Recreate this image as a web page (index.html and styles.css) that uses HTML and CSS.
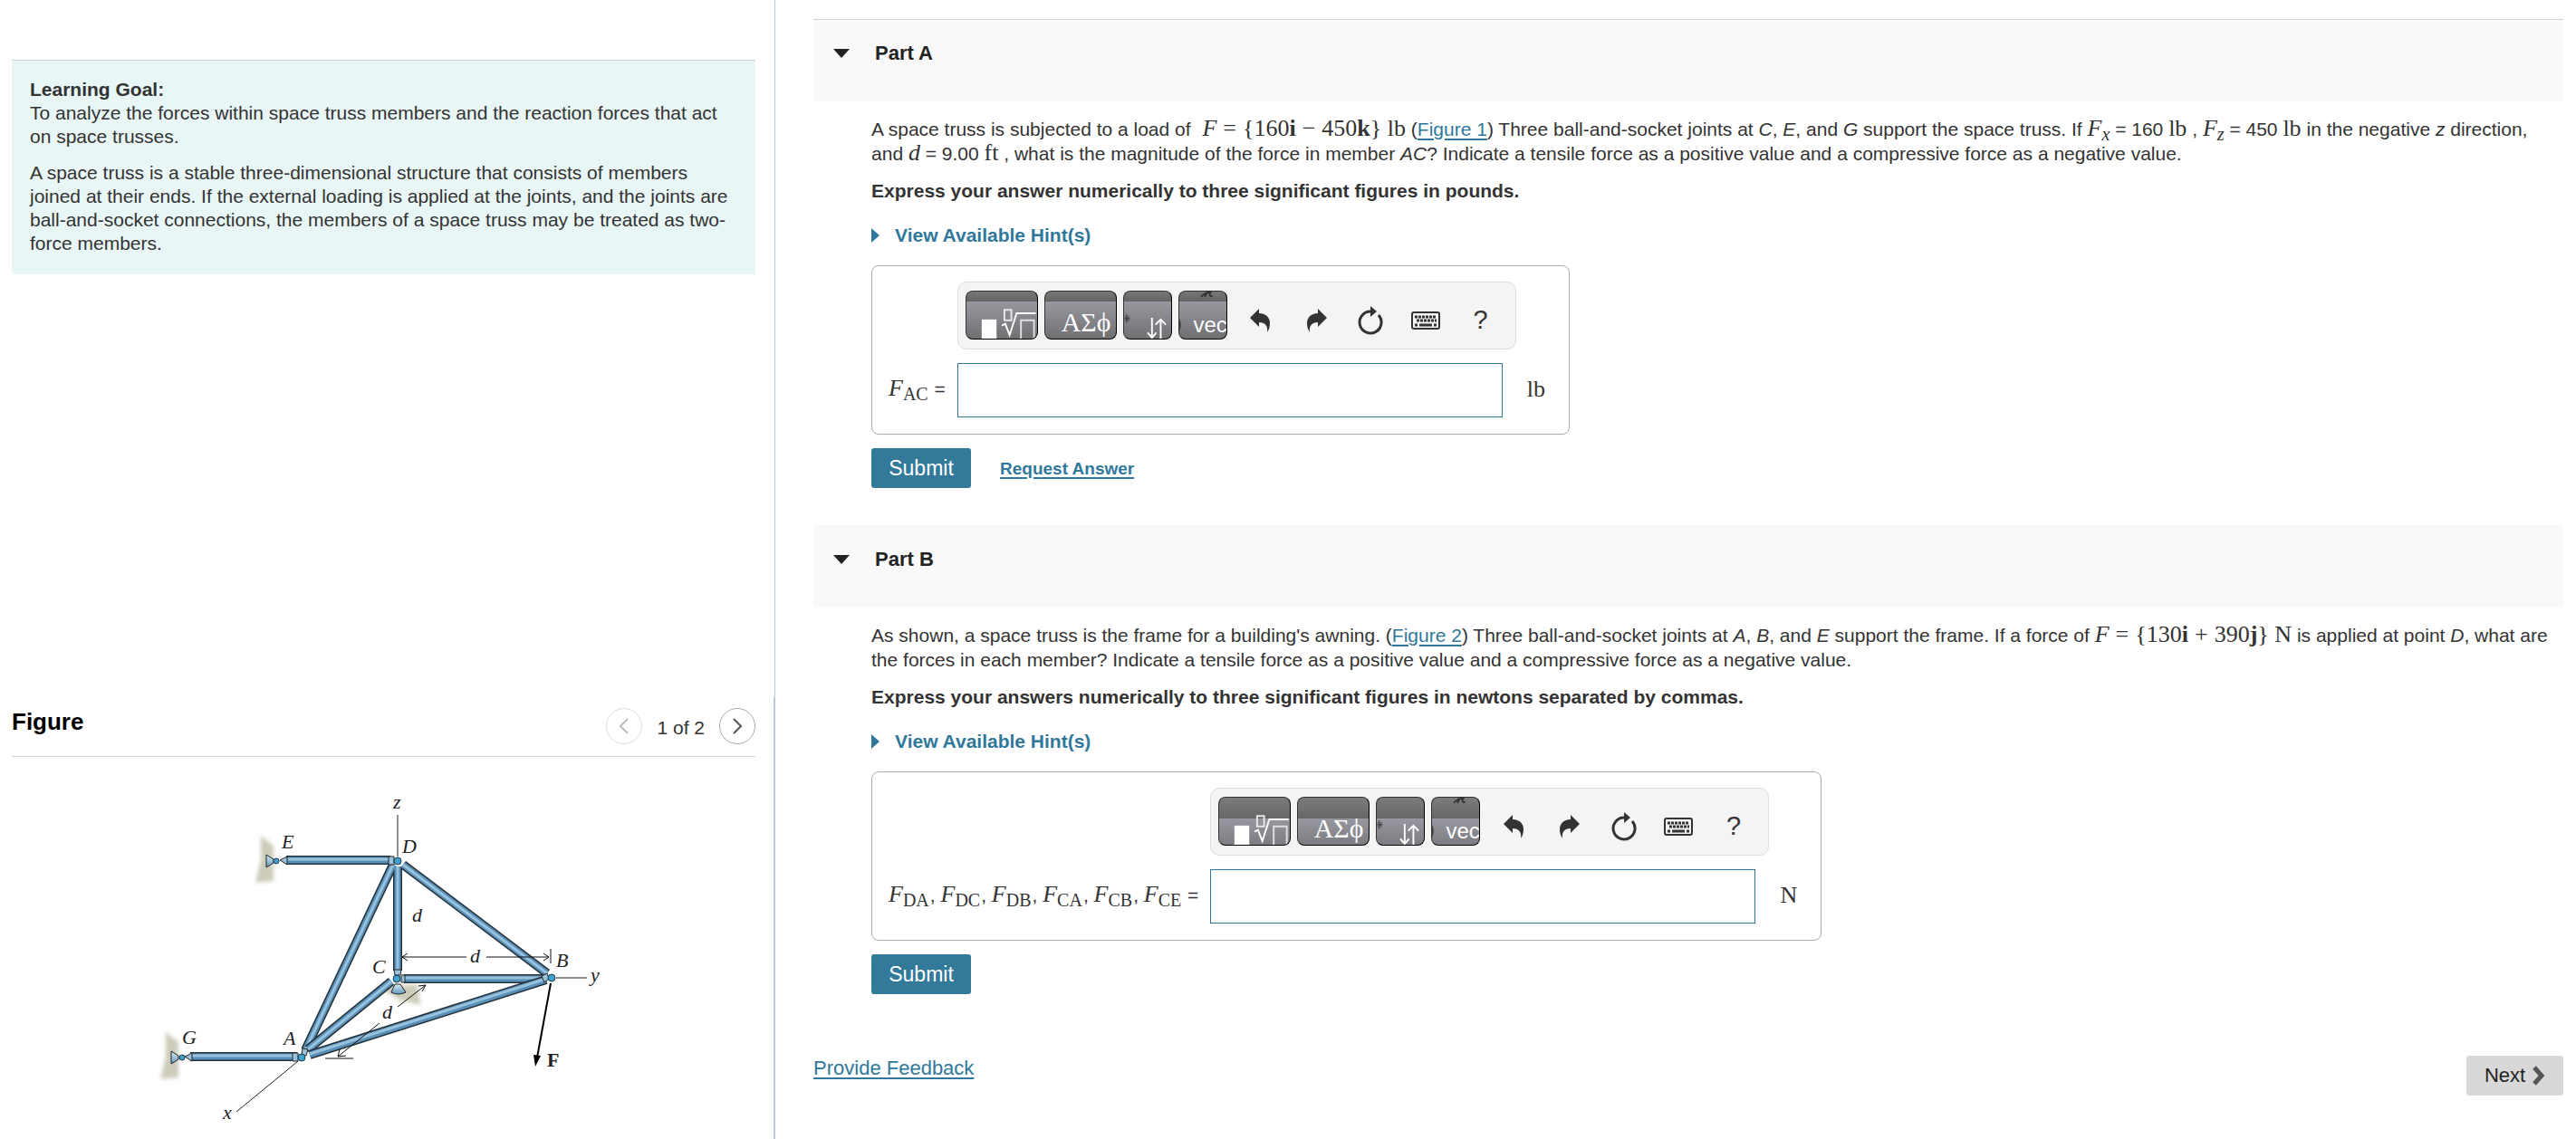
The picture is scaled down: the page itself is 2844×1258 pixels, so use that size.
FILE: index.html
```html
<!DOCTYPE html>
<html lang="en">
<head>
  <meta charset="UTF-8">
  <meta name="viewport" content="width=device-width, initial-scale=1.0">
  <title>Space Trusses</title>
  <link rel="stylesheet" href="styles.css">
</head>
<body>
  <!-- Shared icons -->
  <svg class="sprite" aria-hidden="true">
    <symbol id="icon-template" viewBox="0 0 80 54">
      <rect x="17" y="32" width="17" height="22" fill="#fff"/>
      <rect x="43" y="21" width="8" height="12" fill="none" stroke="#e8e8ec" stroke-width="2"/>
      <path d="M40 39l4-2 5 13 8-25h22" fill="none" stroke="#fff" stroke-width="2"/>
      <path d="M62 54V33h15v21" fill="none" stroke="#e0e0e4" stroke-width="2"/>
    </symbol>
    <symbol id="icon-arrows" viewBox="0 0 54 54">
      <path d="M32 30v23M27 47l5 6 5-6M42 54V32M36 38l6-6 6 6" fill="none" stroke="#fff" stroke-width="2"/>
      <path d="M0 31h7M3 26v10M1 28l5 6M6 28l-5 6" stroke="#38383a" stroke-width="1"/>
    </symbol>
    <symbol id="icon-undo" viewBox="0 0 24 28">
      <path d="M0 11L10 1v5c8 0 12 5 12 11 0 4-1 7-3 10 1-7-2-11-9-11v5z"/>
    </symbol>
    <symbol id="icon-redo" viewBox="0 0 24 28">
      <path d="M24 11L14 1v5C6 6 2 11 2 17c0 4 1 7 3 10-1-7 2-11 9-11v5z"/>
    </symbol>
    <symbol id="icon-reset" viewBox="0 0 28 32">
      <path d="M23 10a12 12 0 1 1-9-4" fill="none" stroke="#333" stroke-width="3"/>
      <path d="M14 0l7 6-7 6z"/>
    </symbol>
    <symbol id="icon-keyboard" viewBox="0 0 32 20">
      <rect x="1" y="1" width="30" height="18" rx="2" fill="none" stroke="#333" stroke-width="2"/>
      <path d="M4 6h24M6 10h22" stroke="#333" stroke-width="3" stroke-dasharray="3 1"/>
      <path d="M4 15h3M9 15h14M25 15h3" stroke="#333" stroke-width="3"/>
    </symbol>
  </svg>

  <aside class="sidebar">
    <section class="goal">
      <h2>Learning Goal:</h2>
      <p>To analyze the forces within space truss members and the reaction forces that act on space trusses.</p>
      <p>A space truss is a stable three-dimensional structure that consists of members joined at their ends. If the external loading is applied at the joints, and the joints are ball-and-socket connections, the members of a space truss may be treated as two-force members.</p>
    </section>

    <section class="figure">
      <div class="figure-header">
        <h2>Figure</h2>
        <div class="pager">
          <button type="button" class="round disabled" aria-label="Previous figure" disabled>
            <svg width="12" height="20" viewBox="0 0 12 20"><path d="M10 2L2 10l8 8"/></svg>
          </button>
          <span>1 of 2</span>
          <button type="button" class="round" aria-label="Next figure">
            <svg width="12" height="20" viewBox="0 0 12 20"><path d="M2 2l8 8-8 8"/></svg>
          </button>
        </div>
      </div>

      <svg class="truss" width="526" height="388" viewBox="160 870 526 388" role="img" aria-label="Space truss">
        <defs>
          <filter id="soft" x="-30%" y="-30%" width="160%" height="160%"><feGaussianBlur stdDeviation="2"/></filter>
          <linearGradient id="support" x1="0" y1="0" x2="0" y2="1">
            <stop offset="0" stop-color="#d9ecf7"/>
            <stop offset="1" stop-color="#5f97bd"/>
          </linearGradient>
        </defs>
        <!-- walls and ground -->
        <g fill="#cdccbb" filter="url(#soft)">
          <path d="M287 923l14 11v39l-20 2 6-26z"/>
          <path d="M182 1140l14 11v39l-20 2 6-26z"/>
          <path d="M418 1091l42-4 3 23-22-5z"/>
        </g>
        <!-- axes -->
        <g stroke="#222" stroke-width="1">
          <path d="M438 900v46M613 1080h34M328 1172l-68 56"/>
        </g>
        <!-- members: dark outline, body, highlight -->
        <g fill="none">
          <path class="edge" d="M433 955L336 1160M444 955l159 120M438 957v115"/>
          <path class="body" d="M433 955L336 1160M444 955l159 120M438 957v115"/>
          <path class="shine" d="M433 955L336 1160M444 955l159 120M438 957v115"/>
          <path class="edge" d="M445 1081h155M431 1084l-92 75"/>
          <path class="body" d="M445 1081h155M431 1084l-92 75"/>
          <path class="shine" d="M445 1080h155M431 1084l-92 75"/>
          <path class="edge" d="M341 1165l261-83"/>
          <path class="body" d="M341 1165l261-83"/>
          <path class="shine" d="M341 1164l261-83"/>
          <path class="edge" d="M315 950h115M209 1167h118"/>
          <path class="body" d="M315 950h115M209 1167h118"/>
          <path class="shine" d="M315 949h115M209 1166h118"/>
        </g>
        <!-- end fittings -->
        <g fill="#9ac2dc" stroke="#222">
          <path d="M428 946h6v9h-6zM322 1163h6v9h-6zM316 946l-8 4 8 5zM211 1163l-8 4 8 5z"/>
          <path d="M434 1071h8l-1 6h-6zM597 1078l6-3 2 6-5 4zM333 1158l6 1-2 7-5-1zM442 1077h4v8h-4z"/>
        </g>
        <g fill="url(#support)" stroke="#222">
          <path d="M293 944l8 5v4l-8 5z"/>
          <path d="M188 1161l8 5v4l-8 5z"/>
          <path d="M435 1087h6l6 9q-9 4-16 0z"/>
        </g>
        <!-- joints -->
        <g fill="#3fa2cc" stroke="#1c3d50">
          <circle cx="438" cy="951" r="4"/>
          <circle cx="437" cy="1081" r="4"/>
          <circle cx="608" cy="1080" r="4"/>
          <circle cx="332" cy="1168" r="4"/>
          <circle cx="304" cy="951" r="3"/>
          <circle cx="200" cy="1168" r="3"/>
        </g>
        <!-- dimensions -->
        <g fill="none" stroke="#111">
          <path d="M443 1057h71M536 1057h69M607 1048v16M449 1053l-6 4 6 4M599 1053l6 4-6 4"/>
          <path d="M438 1112l31-24M461 1089l8-1-4 7M418 1130l-46 37M374 1159l-2 8 9-1M358 1169h31"/>
        </g>
        <path d="M607 1086l-15 82" stroke="#000" stroke-width="2"/>
        <path d="M588 1165l8 1-6 12z"/>
        <g class="labels">
          <text x="433" y="893">z</text>
          <text x="310" y="937">E</text>
          <text x="443" y="942">D</text>
          <text x="454" y="1018">d</text>
          <text x="518" y="1063">d</text>
          <text x="410" y="1075">C</text>
          <text x="613" y="1068">B</text>
          <text x="651" y="1084">y</text>
          <text x="421" y="1125">d</text>
          <text x="312" y="1154">A</text>
          <text x="200" y="1153">G</text>
          <text x="245" y="1236">x</text>
          <text x="603" y="1178" class="force">F</text>
        </g>
      </svg>
    </section>
  </aside>

  <main class="content">
    <!-- Part A -->
    <section class="part">
      <header class="part-header first">
        <svg width="18" height="10" viewBox="0 0 18 10"><path d="M0 0h18L9 10z"/></svg>
        <h2>Part A</h2>
      </header>
      <div class="part-body">
        <p class="question">A space truss is subjected to a load of <span class="math lead"><i>F</i><span class="op">=</span>{160<b>i</b><span class="op">−</span>450<b>k</b>} lb</span> (<a href="#figure1">Figure 1</a>) Three ball-and-socket joints at <i>C</i>, <i>E</i>, and <i>G</i> support the space truss. If <span class="math"><i>F</i><sub><i>x</i></sub></span> = 160 <span class="math">lb</span> , <span class="math"><i>F</i><sub><i>z</i></sub></span> = 450 <span class="math">lb</span> in the negative <i>z</i> direction, and <span class="math"><i>d</i></span> = 9.00 <span class="math">ft</span> , what is the magnitude of the force in member <i>AC</i>? Indicate a tensile force as a positive value and a compressive force as a negative value.</p>
        <p class="instructions">Express your answer numerically to three significant figures in pounds.</p>
        <button type="button" class="hints"><svg width="9" height="16" viewBox="0 0 9 16"><path d="M0 0l9 8-9 8z"/></svg>View Available Hint(s)</button>

        <form class="answer">
          <div class="toolbar">
            <button type="button" class="tool wide" aria-label="Templates"><svg><use href="#icon-template"/></svg></button>
            <button type="button" class="tool wide" aria-label="Symbols"><svg viewBox="0 0 80 54"><text x="18" y="46" class="greek">ΑΣϕ</text></svg></button>
            <button type="button" class="tool" aria-label="Arrows"><svg><use href="#icon-arrows"/></svg></button>
            <button type="button" class="tool" aria-label="Vectors"><svg viewBox="0 0 54 54"><path d="M25 6q5-6 12-5M32 1l-3 5M35 1q-1 5 3 4" fill="none" stroke="#333" stroke-width="2"/><path d="M0 31q4 7 0 15" fill="#444"/><text x="16" y="47" class="vec">vec</text></svg></button>
            <button type="button" class="icon" aria-label="Undo"><svg width="24" height="28"><use href="#icon-undo"/></svg></button>
            <button type="button" class="icon" aria-label="Redo"><svg width="24" height="28"><use href="#icon-redo"/></svg></button>
            <button type="button" class="icon" aria-label="Reset"><svg width="28" height="32"><use href="#icon-reset"/></svg></button>
            <button type="button" class="icon" aria-label="Keyboard shortcuts"><svg width="32" height="20"><use href="#icon-keyboard"/></svg></button>
            <button type="button" class="icon help">?</button>
          </div>
          <label for="answer-a"><span class="math"><i>F</i><sub>AC</sub></span> =</label>
          <input type="text" id="answer-a">
          <span class="unit">lb</span>
        </form>
        <div class="actions">
          <button type="button" class="submit">Submit</button>
          <a href="#request" class="request">Request Answer</a>
        </div>
      </div>
    </section>

    <!-- Part B -->
    <section class="part part-b">
      <header class="part-header">
        <svg width="18" height="10" viewBox="0 0 18 10"><path d="M0 0h18L9 10z"/></svg>
        <h2>Part B</h2>
      </header>
      <div class="part-body">
        <p class="question">As shown, a space truss is the frame for a building's awning. (<a href="#figure2">Figure 2</a>) Three ball-and-socket joints at <i>A</i>, <i>B</i>, and <i>E</i> support the frame. If a force of <span class="math"><i>F</i><span class="op">=</span>{130<b>i</b><span class="op">+</span>390<b>j</b>} N</span> is applied at point <i>D</i>, what are the forces in each member? Indicate a tensile force as a positive value and a compressive force as a negative value.</p>
        <p class="instructions">Express your answers numerically to three significant figures in newtons separated by commas.</p>
        <button type="button" class="hints"><svg width="9" height="16" viewBox="0 0 9 16"><path d="M0 0l9 8-9 8z"/></svg>View Available Hint(s)</button>

        <form class="answer">
          <div class="toolbar">
            <button type="button" class="tool wide" aria-label="Templates"><svg><use href="#icon-template"/></svg></button>
            <button type="button" class="tool wide" aria-label="Symbols"><svg viewBox="0 0 80 54"><text x="18" y="46" class="greek">ΑΣϕ</text></svg></button>
            <button type="button" class="tool" aria-label="Arrows"><svg><use href="#icon-arrows"/></svg></button>
            <button type="button" class="tool" aria-label="Vectors"><svg viewBox="0 0 54 54"><path d="M25 6q5-6 12-5M32 1l-3 5M35 1q-1 5 3 4" fill="none" stroke="#333" stroke-width="2"/><path d="M0 31q4 7 0 15" fill="#444"/><text x="16" y="47" class="vec">vec</text></svg></button>
            <button type="button" class="icon" aria-label="Undo"><svg width="24" height="28"><use href="#icon-undo"/></svg></button>
            <button type="button" class="icon" aria-label="Redo"><svg width="24" height="28"><use href="#icon-redo"/></svg></button>
            <button type="button" class="icon" aria-label="Reset"><svg width="28" height="32"><use href="#icon-reset"/></svg></button>
            <button type="button" class="icon" aria-label="Keyboard shortcuts"><svg width="32" height="20"><use href="#icon-keyboard"/></svg></button>
            <button type="button" class="icon help">?</button>
          </div>
          <label for="answer-b"><span class="math"><i>F</i><sub>DA</sub></span>, <span class="math"><i>F</i><sub>DC</sub></span>, <span class="math"><i>F</i><sub>DB</sub></span>, <span class="math"><i>F</i><sub>CA</sub></span>, <span class="math"><i>F</i><sub>CB</sub></span>, <span class="math"><i>F</i><sub>CE</sub></span> =</label>
          <input type="text" id="answer-b">
          <span class="unit">N</span>
        </form>
        <div class="actions">
          <button type="button" class="submit">Submit</button>
        </div>
      </div>
    </section>

    <footer class="footer">
      <a href="#feedback">Provide Feedback</a>
      <button type="button" class="next">Next
        <svg width="14" height="22" viewBox="0 0 14 22"><path d="M2 2l8 9-8 9" fill="none" stroke="#555" stroke-width="5"/></svg>
      </button>
    </footer>
  </main>
</body>
</html>
```

FILE: styles.css
```css
* {
  box-sizing: border-box;
}
body {
  display: flex;
  min-height: 100vh;
  margin: 0;
  font-family: "Liberation Sans", Arial, sans-serif;
  font-size: 21px;
  line-height: 27px;
  color: #333;
  background-color: #fff;
}
h2, p {
  margin: 0;
}
a {
  color: #30789b;
  text-decoration-thickness: 2px;
  text-underline-offset: 3px;
}
button {
  padding: 0;
  border: none;
  font-family: inherit;
  cursor: pointer;
}
.sprite {
  display: none;
}

/* Left column */
.sidebar {
  display: flex;
  flex-direction: column;
  flex: none;
  width: 30.1%;
  padding-top: 66px;
  border-right: 1px solid #b9cdd8;
}
.goal {
  margin: 0 21px 0 13px;
  padding: 19px 20px 21px;
  line-height: 26px;
  background-color: #e8f6f6;
  border-top: 1px solid #d5d5d5;
}
.goal h2 {
  font-size: 21px;
}
.goal p + p {
  margin-top: 14px;
}
.figure {
  margin-top: auto;
  padding: 12px 20px 0 13px;
  border-right: 1px solid #b4c6e0;
}
.figure-header {
  display: flex;
  justify-content: space-between;
  height: 54px;
  border-bottom: 1px solid #d5d5d5;
}
.figure-header h2 {
  padding-top: 2px;
  font-size: 26px;
  color: #000;
}
.pager {
  display: flex;
  gap: 16px;
}
.pager span {
  padding-top: 8px;
}
.round {
  width: 40px;
  height: 40px;
  border: 1px solid #aaa;
  border-radius: 50%;
  background: #fff;
}
.round svg {
  display: block;
  margin: 0 auto;
  fill: none;
  stroke: #555;
  stroke-width: 2px;
}
.round.disabled {
  border-color: #ddd;
}
.round.disabled svg {
  stroke: #bbb;
}
.truss {
  display: block;
  margin: 34px auto 0;
}
.truss .edge {
  stroke: #26323a;
  stroke-width: 10px;
}
.truss .body {
  stroke: #5890b9;
  stroke-width: 7px;
}
.truss .shine {
  stroke: #98c1dc;
  stroke-width: 3px;
}
.labels {
  font-family: "Liberation Serif", "Times New Roman", serif;
  font-size: 22px;
  font-style: italic;
  fill: #222;
}
.labels .force {
  font-style: normal;
  font-weight: bold;
}

/* Right column */
.content {
  flex: 1;
  padding: 21px 14px 0 42px;
}
.part-header {
  display: flex;
  align-items: flex-start;
  gap: 28px;
  height: 91px;
  padding: 32px 22px 0;
  background-color: #f9f9f9;
}
.part-header.first {
  padding-top: 31px;
  border-top: 1px solid #d5d5d5;
}
.part-header svg {
  margin-top: 1px;
  fill: #222;
}
.part-header h2 {
  margin-top: -8px;
  font-size: 22px;
  color: #222;
}
.part-b {
  margin-top: 41px;
}
.part-body {
  padding: 17px 4px 0 64px;
}
.math, .unit {
  font-family: "Liberation Serif", "Times New Roman", serif;
  font-size: 26px;
  line-height: 20px;
}
.math.lead {
  margin-left: 7px;
}
.math .op {
  margin: 0 7px;
}
.math sub {
  font-size: 20px;
  line-height: 10px;
  vertical-align: -5px;
}
.instructions {
  margin-top: 14px;
  font-weight: bold;
}
.hints {
  display: flex;
  align-items: center;
  gap: 17px;
  margin-top: 22px;
  font-size: 21px;
  font-weight: bold;
  line-height: 27px;
  color: #30789b;
  background: none;
}
.hints svg {
  fill: #30789b;
}
.answer {
  display: grid;
  grid-template-columns: auto auto auto;
  align-items: center;
  width: fit-content;
  margin-top: 20px;
  padding: 17px 26px 18px 18px;
  row-gap: 15px;
  border: 1px solid #aaa;
  border-radius: 8px;
}
.toolbar {
  display: flex;
  align-items: center;
  grid-column: 2 / 4;
  width: 617px;
  height: 75px;
  padding: 0 8px;
  background-color: #f4f4f4;
  border: 1px solid #ddd;
  border-radius: 10px;
}
.tool {
  flex: none;
  width: 54px;
  height: 54px;
  margin: 0 7px 2px 0;
  overflow: hidden;
  background: linear-gradient(#777, #636363 22%, #97979f 22%, #707073);
  border: 1px solid #333;
  border-right-color: #000;
  border-bottom-color: #000;
  border-radius: 8px;
}
.tool.wide {
  width: 80px;
}
.part-b .tool {
  background: linear-gradient(#7c7c7e, #666 45%, #97979f 45%, #7c7c82);
}
.tool svg {
  display: block;
  width: 100%;
  height: 100%;
}
.greek {
  font-family: "Liberation Serif", "Times New Roman", serif;
  font-size: 31px;
  fill: #fff;
}
.vec {
  font-size: 25px;
  fill: #fff;
}
.icon {
  display: flex;
  align-items: center;
  justify-content: center;
  flex: 1;
  height: 40px;
  margin-top: 10px;
  background: none;
  fill: #333;
}
.help {
  font-size: 29px;
  color: #333;
}
.answer label {
  padding: 0 13px 3px 0;
}
.answer label sub {
  margin-right: 1px;
}
.answer input {
  width: 602px;
  height: 60px;
  padding: 0 12px;
  font-size: 24px;
  border: 1px solid #30789b;
}
.unit {
  margin-left: 27px;
  padding-bottom: 3px;
}
.actions {
  display: flex;
  align-items: center;
  gap: 32px;
  margin-top: 15px;
}
.submit {
  width: 110px;
  height: 44px;
  font-size: 23px;
  color: #fff;
  background-color: #32799a;
  border-radius: 3px;
}
.request {
  font-size: 19px;
  font-weight: bold;
}
.footer {
  display: flex;
  justify-content: space-between;
  align-items: flex-start;
  margin-top: 68px;
  font-size: 22px;
}
.next {
  display: flex;
  align-items: center;
  justify-content: center;
  gap: 8px;
  width: 107px;
  height: 44px;
  font-size: 22px;
  color: #222;
  background-color: #d8d8d8;
  border-radius: 3px;
}
```
